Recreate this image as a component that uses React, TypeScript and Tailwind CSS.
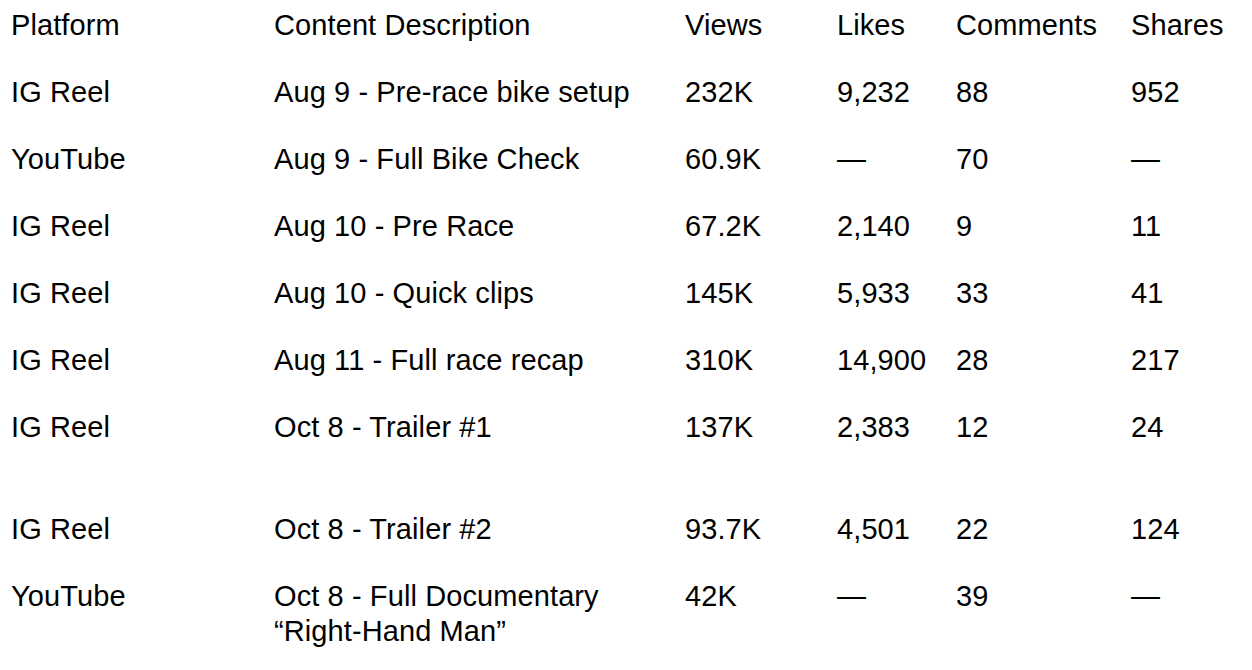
const rows: { platform: string; content: string[]; views: string; likes: string; comments: string; shares: string }[] = [
  { platform: 'IG Reel', content: ['Aug 9 - Pre-race bike setup'], views: '232K', likes: '9,232', comments: '88', shares: '952' },
  { platform: 'YouTube', content: ['Aug 9 - Full Bike Check'], views: '60.9K', likes: '—', comments: '70', shares: '—' },
  { platform: 'IG Reel', content: ['Aug 10 - Pre Race'], views: '67.2K', likes: '2,140', comments: '9', shares: '11' },
  { platform: 'IG Reel', content: ['Aug 10 - Quick clips'], views: '145K', likes: '5,933', comments: '33', shares: '41' },
  { platform: 'IG Reel', content: ['Aug 11 - Full race recap'], views: '310K', likes: '14,900', comments: '28', shares: '217' },
  { platform: 'IG Reel', content: ['Oct 8 - Trailer #1', '\u00a0'], views: '137K', likes: '2,383', comments: '12', shares: '24' },
  { platform: 'IG Reel', content: ['Oct 8 - Trailer #2'], views: '93.7K', likes: '4,501', comments: '22', shares: '124' },
  { platform: 'YouTube', content: ['Oct 8 - Full Documentary', '“Right-Hand Man”'], views: '42K', likes: '—', comments: '39', shares: '—' },
];

const headers = ['Platform', 'Content Description', 'Views', 'Likes', 'Comments', 'Shares'];

const cell = 'pl-[11px] py-4 whitespace-nowrap';

export default function App() {
  return (
    <div className="min-h-screen bg-white text-black font-['Liberation_Sans',Arial,sans-serif] text-[29px] leading-[35px] tracking-[0.1px] overflow-hidden">
      <div className="mt-[-8px] grid grid-cols-[263px_411px_152px_119px_175px_1fr]">
        {headers.map((h) => (
          <div key={h} className={cell}>
            {h}
          </div>
        ))}
        {rows.map((r, i) => (
          <div key={i} className="contents">
            <div className={cell}>{r.platform}</div>
            <div className={cell}>
              {r.content.map((line, j) => (
                <div key={j}>{line}</div>
              ))}
            </div>
            <div className={cell}>{r.views}</div>
            <div className={cell}>{r.likes}</div>
            <div className={cell}>{r.comments}</div>
            <div className={cell}>{r.shares}</div>
          </div>
        ))}
      </div>
    </div>
  );
}
